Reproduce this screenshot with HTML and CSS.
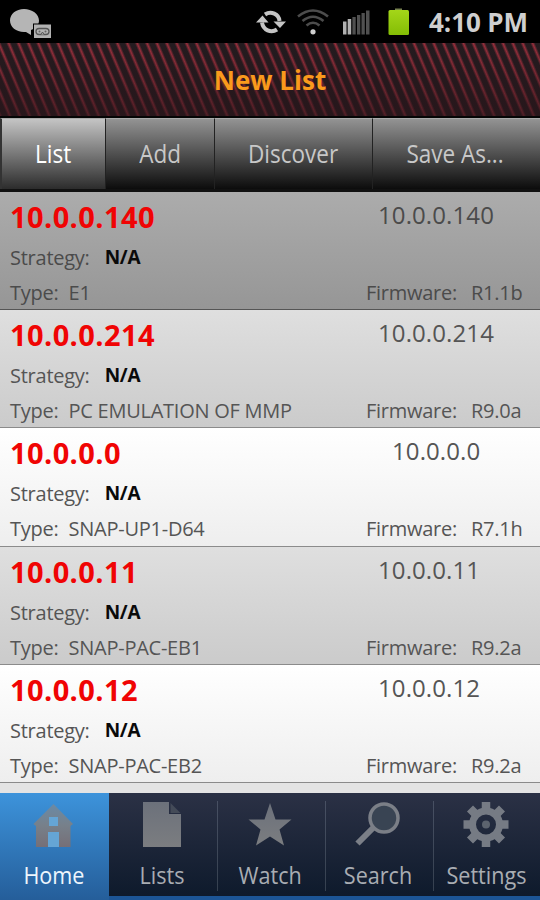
FILE: index.html
```html
<!DOCTYPE html>
<html lang="en">
<head>
    <meta charset="UTF-8">
    <meta name="viewport" content="width=device-width, initial-scale=1.0">
    <title>New List</title>
    <link rel="stylesheet" href="styles.css">
</head>
<body>
    <div class="statusbar">
        <svg class="talk" width="46" height="34" viewBox="0 0 46 34">
            <path d="M14 4C6 4 0 9 0 15.500C0 22 6 27 14 27L16 27L21 30L21 25C26 23 29 20 29 15.500C29 9 22 4 14 4Z" fill="#b5b5b5"/>
            <rect x="23.500" y="19" width="18" height="14.500" fill="#b2b2b2" stroke="#000"/>
            <rect x="26" y="23.500" width="13" height="6" rx="3" fill="none" stroke="#555" stroke-width="1.300"/>
            <path d="M31 29.500L32.500 27L34 29.500" fill="#b2b2b2" stroke="#555"/>
            <circle cx="29.500" cy="26.500" r="1" fill="#666"/><circle cx="35.500" cy="26.500" r="1" fill="#666"/>
        </svg>
        <div class="status-icons">
            <svg width="30" height="28" viewBox="256 8 30 28">
                <g fill="none" stroke="#c4c4c4" stroke-width="4">
                    <path d="M265 14.500C271 10.500 279 14 279.500 21"/>
                    <path d="M277 29.500C271 33.500 263 30 262 22.500"/>
                </g>
                <path d="M273.500 21.500H286L280 28Z M256 22.500L262.500 15.500L268.500 22.500Z" fill="#c4c4c4"/>
            </svg>
            <svg width="34" height="28" viewBox="296 8 34 28">
                <g fill="none" stroke="#4c4c4c" stroke-width="2.600">
                    <path d="M298 16.500Q313 4.500 328 16.500"/>
                    <path d="M302.500 21Q313 12.500 323.500 21"/>
                    <path d="M306.500 25.500Q313 20 319.500 25.500"/>
                </g>
                <circle cx="313" cy="31.800" r="2.600" fill="#d0d0d0"/>
            </svg>
            <svg width="28" height="28" viewBox="342 8 28 28">
                <path d="M343 21.500h3.500V34.500h-3.500Z M347.700 19h3.500V34.500h-3.500Z" fill="#b0b0b0"/>
                <path d="M352.400 17h3.300V34.500h-3.300Z M357 15h3.300V34.500H357Z M361.500 13h3.300V34.500h-3.300Z M366 10.500h3.500V34.500H366Z" fill="#505050"/>
            </svg>
            <svg width="22" height="28" viewBox="388 8 22 28">
                <defs>
                    <linearGradient id="battery" x1="0" y1="0" x2="0" y2="1">
                        <stop offset="0" stop-color="#a4d619"/>
                        <stop offset="1" stop-color="#84bd05"/>
                    </linearGradient>
                </defs>
                <rect x="395" y="8.500" width="7" height="3" fill="#77824f"/>
                <rect x="388.500" y="10" width="20.500" height="25" rx="1.500" fill="url(#battery)"/>
            </svg>
        </div>
        <div class="clock">4:10 PM</div>
    </div>

    <div class="header"><h1>New List</h1></div>

    <div class="tabs">
        <div class="tab active"><span>List</span></div>
        <div class="tab"><span>Add</span></div>
        <div class="tab"><span>Discover</span></div>
        <div class="tab"><span>Save As...</span></div>
    </div>

    <div class="list">
        <div class="row selected">
            <div class="line top"><b class="name">10.0.0.140</b><span class="ip">10.0.0.140</span></div>
            <div class="line"><span class="label">Strategy:</span><b class="strategy">N/A</b></div>
            <div class="line"><span class="label">Type:</span><span class="type">E1</span><span class="fw">Firmware:</span><span class="version">R1.1b</span></div>
        </div>
        <div class="row odd">
            <div class="line top"><b class="name">10.0.0.214</b><span class="ip">10.0.0.214</span></div>
            <div class="line"><span class="label">Strategy:</span><b class="strategy">N/A</b></div>
            <div class="line"><span class="label">Type:</span><span class="type">PC EMULATION OF MMP</span><span class="fw">Firmware:</span><span class="version">R9.0a</span></div>
        </div>
        <div class="row">
            <div class="line top"><b class="name">10.0.0.0</b><span class="ip short">10.0.0.0</span></div>
            <div class="line"><span class="label">Strategy:</span><b class="strategy">N/A</b></div>
            <div class="line"><span class="label">Type:</span><span class="type">SNAP-UP1-D64</span><span class="fw">Firmware:</span><span class="version">R7.1h</span></div>
        </div>
        <div class="row odd">
            <div class="line top"><b class="name">10.0.0.11</b><span class="ip">10.0.0.11</span></div>
            <div class="line"><span class="label">Strategy:</span><b class="strategy">N/A</b></div>
            <div class="line"><span class="label">Type:</span><span class="type">SNAP-PAC-EB1</span><span class="fw">Firmware:</span><span class="version">R9.2a</span></div>
        </div>
        <div class="row">
            <div class="line top"><b class="name">10.0.0.12</b><span class="ip">10.0.0.12</span></div>
            <div class="line"><span class="label">Strategy:</span><b class="strategy">N/A</b></div>
            <div class="line"><span class="label">Type:</span><span class="type">SNAP-PAC-EB2</span><span class="fw">Firmware:</span><span class="version">R9.2a</span></div>
        </div>
    </div>

    <div class="nav">
        <div class="nav-item active">
            <svg width="54" height="54" viewBox="27 797 54 54">
                <defs>
                    <linearGradient id="house" x1="0" y1="0" x2="0" y2="1">
                        <stop offset="0" stop-color="#6a8aa6"/>
                        <stop offset="0.500" stop-color="#77808a"/>
                        <stop offset="1" stop-color="#756f77"/>
                    </linearGradient>
                </defs>
                <path d="M53.500 804L73 824L70.500 826V847H36V826L33.500 824Z" fill="url(#house)"/>
                <path d="M49 817H58V826H49Z M48 832H59V847H48Z" fill="#65a5d5"/>
            </svg>
            <span>Home</span>
        </div>
        <div class="nav-item">
            <svg width="54" height="54" viewBox="135 797 54 54">
                <defs>
                    <linearGradient id="grey" x1="0" y1="0" x2="0" y2="1">
                        <stop offset="0" stop-color="#6c717b"/>
                        <stop offset="1" stop-color="#7b7d80"/>
                    </linearGradient>
                </defs>
                <path d="M143 802H169V814H181V847H143Z" fill="url(#grey)"/>
                <path d="M170.500 803L180.500 813H170.500Z" fill="#444b58"/>
            </svg>
            <span>Lists</span>
        </div>
        <div class="nav-item">
            <svg width="54" height="54" viewBox="243 797 54 54">
                <path d="M270 803L275.500 819.500H291.500L279.500 829.500L284 845.500L270 836.500L256 845.500L260.500 829.500L248.500 819.500H264.500Z" fill="url(#grey)"/>
            </svg>
            <span>Watch</span>
        </div>
        <div class="nav-item">
            <svg width="54" height="54" viewBox="351 797 54 54">
                <path d="M373 828L357.500 843.500" stroke="#7b7f87" stroke-width="6"/>
                <circle cx="384" cy="818" r="14" fill="#394453" stroke="#7b7f87" stroke-width="3.500"/>
            </svg>
            <span>Search</span>
        </div>
        <div class="nav-item">
            <svg width="54" height="54" viewBox="459 797 54 54">
                <circle cx="486" cy="824.500" r="13.500" fill="none" stroke="#767b84" stroke-width="7"/>
                <g stroke="#767b84" stroke-width="8.500">
                    <path d="M486 802V811M486 838V847M463.500 824.500H472M500 824.500H508.500"/>
                    <path d="M470 808.500L477 815.500M495 833.500L502 840.500M502 808.500L495 815.500M477 833.500L470 840.500"/>
                </g>
                <circle cx="486" cy="824.500" r="4" fill="#5c636e"/>
            </svg>
            <span>Settings</span>
        </div>
    </div>
</body>
</html>
```
FILE: styles.css
```css
* {
    box-sizing: border-box;
}

body {
    margin: 0;
    width: 540px;
    height: 900px;
    overflow: hidden;
    display: flex;
    flex-direction: column;
    background: #000;
    font-family: "Open Sans", "Noto Sans", sans-serif;
}

.statusbar {
    height: 43px;
    flex: none;
    display: flex;
    align-items: center;
    padding: 0 12px 0 10px;
    background: #000;
}

.status-icons {
    display: flex;
    margin-left: 200px;
    gap: 14px;
}

.status-icons svg:nth-child(2) {
    margin-left: -4px;
}

.status-icons svg:nth-child(3) {
    margin-left: -2px;
}

.status-icons svg:nth-child(4) {
    margin-left: 4px;
}

.clock {
    margin-left: auto;
    padding-top: 2px;
    color: #cfcfcf;
    font-size: 26px;
    font-weight: 700;
    line-height: 43px;
    letter-spacing: -0.1px;
    white-space: nowrap;
}

.header {
    height: 75px;
    flex: none;
    display: flex;
    align-items: center;
    justify-content: center;
    border-bottom: 2px solid #050505;
    background:
        linear-gradient(rgba(36, 25, 28, 0) 0%, rgba(42, 20, 25, 0.65) 100%),
        repeating-linear-gradient(67deg, #9c303d 0, #241b1f 2.3px, #241b1f 6.8px, #9c303d 9.1px);
}

.header h1 {
    margin: 0;
    padding-top: 1px;
    color: #fa9a1c;
    font-size: 26px;
    font-weight: 700;
    line-height: 36px;
}

/* tab strip */
.tabs {
    height: 74px;
    flex: none;
    display: grid;
    grid-template-columns: 105px 109px 158px 168px;
    border-bottom: 3px solid #111;
}

.tab {
    display: flex;
    align-items: center;
    justify-content: center;
    padding-bottom: 2px;
    color: #c8c8c8;
    font-size: 25px;
    border-left: 1px solid #222;
    border-top: 1px solid #aaa;
    background: linear-gradient(#939393, #0c0c0c);
}

.tab span,
.nav-item span {
    display: inline-block;
    transform: scaleX(0.9);
    white-space: nowrap;
}

.tab:last-child span {
    margin-right: 2px;
}

.tab.active {
    color: #fff;
    border-left: 2px solid #333;
    background: linear-gradient(#c4c4c4, #2c2c2c);
}

/* devices */
.list {
    height: 601px;
    flex: none;
    background: #e4e4e4;
}

.row {
    height: 118.2px;
    padding: 5px 17px 0 10px;
    border-bottom: 1.5px solid #8b8b8b;
    color: #555;
    background: linear-gradient(#fff, #eee);
}

.row.odd {
    background: linear-gradient(#dfdfdf, #cbcbcb);
}

.row.selected {
    color: #4b4b4b;
    border-bottom-color: #555;
    background: linear-gradient(#acacac, #969696);
}

.line {
    height: 35px;
    display: flex;
    align-items: center;
    font-size: 20px;
    line-height: 35px;
    letter-spacing: -0.25px;
    white-space: nowrap;
}

.line.top {
    height: 43px;
    align-items: flex-start;
    letter-spacing: 0;
}

.name {
    width: 368px;
    color: #f00404;
    font-size: 29px;
    line-height: 39px;
    letter-spacing: 0.4px;
}

.ip {
    font-size: 24px;
    letter-spacing: 0.1px;
}

.ip.short {
    padding-left: 14px;
}

.strategy {
    margin-left: 15px;
    color: #0a0a0a;
    font-size: 19px;
}

.type {
    margin-left: 10px;
}

.fw {
    margin-left: auto;
}

.version {
    width: 52px;
    margin-left: 14px;
}

/* bottom navigation */
.nav {
    height: 107px;
    flex: none;
    display: grid;
    grid-template-columns: repeat(5, 1fr);
    border-bottom: 4px solid #1c5596;
    background: linear-gradient(#2b3145, #0e1a2c);
}

.nav-item {
    display: flex;
    flex-direction: column;
    align-items: center;
    padding-top: 4px;
    color: #a9adb3;
    font-size: 24px;
    line-height: 48px;
    background: linear-gradient(#485063, #35404f) left 1px center / 1px 90px no-repeat;
}

.nav-item svg {
    flex: none;
}

.nav-item.active {
    margin: 0 -1px -4px 0;
    padding-right: 1px;
    color: #eef6fd;
    background: linear-gradient(#3d93db, #245c98);
}

.nav-item.active + .nav-item {
    background: none;
}
```
